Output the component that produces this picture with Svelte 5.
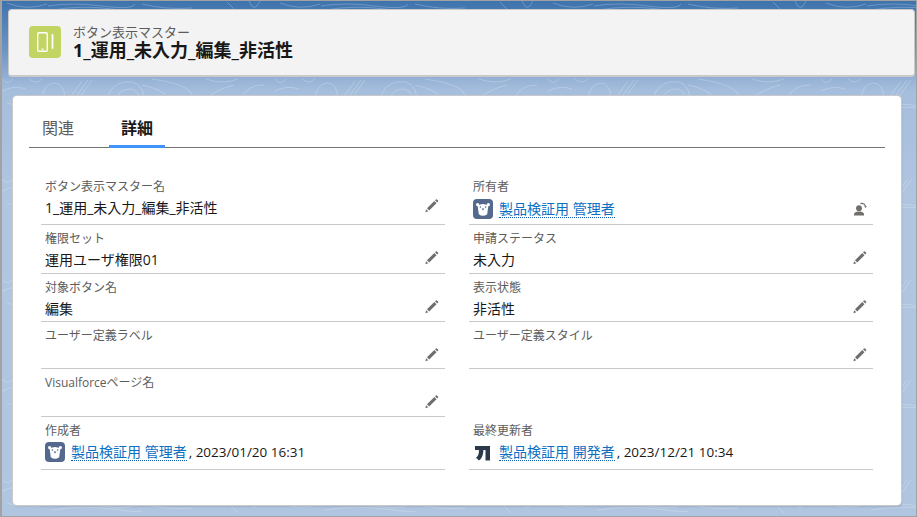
<script>
  const pencil = "M1.2 10.2 0.3 13.2 3.3 12.3ZM2 9.3 9.3 2 11.5 4.2 4.2 11.5ZM10 1.3 10.9.4Q11.4 0 11.9.4L13.1 1.6Q13.5 2.1 13.1 2.6L12.2 3.5Z";

  const rows = [
    [
      { label: "ボタン表示マスター名", value: "1_運用_未入力_編集_非活性", edit: true },
      { label: "所有者", user: "製品検証用 管理者", avatar: "bear", change: true }
    ],
    [
      { label: "権限セット", value: "運用ユーザ権限01", edit: true },
      { label: "申請ステータス", value: "未入力", edit: true }
    ],
    [
      { label: "対象ボタン名", value: "編集", edit: true },
      { label: "表示状態", value: "非活性", edit: true }
    ],
    [
      { label: "ユーザー定義ラベル", value: "", edit: true },
      { label: "ユーザー定義スタイル", value: "", edit: true }
    ],
    [{ label: "Visualforceページ名", value: "", edit: true }, null],
    [
      { label: "作成者", user: "製品検証用 管理者", avatar: "bear", date: "2023/01/20 16:31" },
      { label: "最終更新者", user: "製品検証用 開発者", avatar: "logo", date: "2023/12/21 10:34" }
    ]
  ];
</script>

{#snippet bear()}
  <svg class="avatar" viewBox="0 0 20 20">
    <rect width="20" height="20" rx="4" fill="#54698d" />
    <circle cx="4.6" cy="5.6" r="1.6" fill="#fff" />
    <circle cx="15.4" cy="5.6" r="1.6" fill="#fff" />
    <path d="M4.6 6.6Q10 3.6 15.4 6.6L14.2 15.2Q10 18.4 5.8 15.2Z" fill="#fff" />
    <circle cx="7.4" cy="8" r=".8" fill="#54698d" />
    <circle cx="12.6" cy="8" r=".8" fill="#54698d" />
    <path d="M8.6 9.6H11.4L10 11.4Z" fill="#54698d" />
  </svg>
{/snippet}

{#snippet logo()}
  <svg class="avatar" viewBox="0 0 20 20">
    <path d="M2 4H17V18.5H12.5V8H10.4Q10.4 15.4 6 18.5L3 15.8Q6 13.8 6 8H2Z" fill="#2b3a4a" />
  </svg>
{/snippet}

<div class="page">
  <svg class="contours" aria-hidden="true">
    <defs>
      <pattern id="topo" width="273" height="100" patternUnits="userSpaceOnUse">
        <g fill="none" stroke="#fff" stroke-opacity=".28" stroke-width=".8">
          <path d="M5 2Q25 10 45 3M46 5Q70 1 100 5T133 3M50 9Q80 4 110 8T140 10" />
          <path d="M140 3Q165 9 190 7M225 1Q232 8 236 12M247 0Q252 13 258 0" />
          <path d="M40 97Q42 83 52 82Q62 82 63 97" />
          <path d="M68 97 80 80M73 97 86 79M77 97 90 79" />
          <path d="M106 97Q108 84 122 81Q140 78 142 97M115 97Q118 88 128 88Q135 88 138 97" />
          <path d="M140 84Q160 88 166 97M150 78Q192 84 190 97" />
          <path d="M204 78Q220 84 236 78M204 97Q216 88 232 84" />
          <path d="M240 97Q245 84 262 84" />
          <path d="M0 78Q5 85 11 78M27 78Q34 84 40 78M0 90Q12 84 24 88" />
        </g>
      </pattern>
    </defs>
    <rect width="100%" height="100%" fill="url(#topo)" />
  </svg>

  <header class="highlights">
    <div class="icon-box">
      <svg viewBox="0 0 32 32" width="32" height="32">
        <rect x="8.7" y="6.7" width="9.6" height="18.6" rx="1.4" fill="none" stroke="#fff" stroke-width="1.4" />
        <rect x="12.4" y="22.6" width="2.2" height="1.2" fill="#fff" />
        <rect x="22.6" y="8" width="1.8" height="15" rx=".9" fill="#fff" />
      </svg>
    </div>
    <div class="titles">
      <div class="object">ボタン表示マスター</div>
      <h1>1_運用_未入力_編集_非活性</h1>
    </div>
  </header>

  <main class="card">
    <nav class="tabs">
      <span class="tab">関連</span>
      <span class="tab active">詳細</span>
    </nav>

    <div class="fields">
      {#each rows as row, i}
        {#each row as field}
          {#if field}
            <div class="field">
              <div class="label">{field.label}</div>
              <div class="value" class:owner={field.change}>
                {#if field.user}
                  {#if field.avatar === "bear"}
                    {@render bear()}
                  {:else}
                    {@render logo()}
                  {/if}
                  <span class="link">{field.user}</span>
                  {#if field.date}<span class="date">, {field.date}</span>{/if}
                {:else}
                  <span>{field.value}</span>
                {/if}
                {#if field.edit}
                  <svg class="action" viewBox="0 0 14 14"><path d={pencil} /></svg>
                {/if}
                {#if field.change}
                  <svg class="action change" viewBox="0 0 14 14">
                    <circle cx="6" cy="6.2" r="2.9" />
                    <path d="M1 13.4V11.6Q1.3 10.4 4.4 9.6H7.6Q10.7 10.4 11 11.6V13.4Z" />
                    <path d="M7.4 1.6Q11 .6 12.6 4" fill="none" stroke="#706e6b" stroke-width="1.1" />
                    <path d="M11 4.2H14L12.6 6Z" />
                  </svg>
                {/if}
              </div>
            </div>
          {:else}
            <div></div>
          {/if}
        {/each}
      {/each}
    </div>
  </main>
</div>

<style>
  :global(body) {
    margin: 0;
  }

  .page {
    position: relative;
    box-sizing: border-box;
    width: 917px;
    height: 517px;
    padding: 8px 0 0 6px;
    overflow: hidden;
    border: 1px solid #a2a2a2;
    border-left-width: 2px;
    background: linear-gradient(#3e73ad 0, #6e95c3 50px, #a6bedd 90px, #b0c5e0 200px);
    font-family: "Open Sans", "Noto Sans CJK JP", sans-serif;
    color: #16325c;
  }

  .contours {
    position: absolute;
    inset: 0;
    width: 100%;
    height: 100%;
  }

  .highlights {
    position: relative;
    box-sizing: border-box;
    display: flex;
    align-items: center;
    gap: 12px;
    width: 907px;
    height: 68px;
    padding: 0 20px;
    background: #f3f3f3;
    border: 1px solid #c9c9c9;
    border-bottom-width: 2px;
    border-radius: 4px;
  }

  .icon-box {
    display: flex;
    width: 32px;
    height: 32px;
    margin-top: -1px;
    background: #c2d563;
    border-radius: 4px;
  }

  .titles {
    padding-top: 1px;
  }

  .object {
    font-size: 13px;
    line-height: 15px;
    color: #5c5c5c;
  }

  h1 {
    margin: 0;
    font-size: 18px;
    line-height: 21px;
    font-weight: 700;
    color: #181818;
  }

  .card {
    position: relative;
    box-sizing: border-box;
    width: 888px;
    height: 409px;
    margin: 19px 0 0 5px;
    padding: 0 16px;
    background: #fff;
    border-radius: 4px;
    box-shadow: 0 0 0 1px #c9c9c9, 1px 2px 2px rgba(0, 0, 0, 0.12);
  }

  .tabs {
    display: flex;
    height: 51px;
    border-bottom: 1px solid #747474;
  }

  .tab {
    box-sizing: border-box;
    width: 80px;
    height: 52px;
    padding: 21px 0 0 13px;
    font-size: 16px;
    line-height: 22px;
    color: #5c5c5c;
  }

  .tab.active {
    width: 56px;
    padding-left: 12px;
    font-weight: 700;
    color: #181818;
    border-bottom: 3px solid #3e94f8;
  }

  .fields {
    display: grid;
    grid-template-columns: 404px 404px;
    grid-template-rows: 52px 49px 48px 47px 48px 53px;
    column-gap: 24px;
    margin: 25px 0 0 12px;
  }

  .field {
    box-sizing: border-box;
    padding: 7px 4px 0;
    border-bottom: 1px solid #c9c9c9;
  }

  .label {
    font-size: 12px;
    line-height: 14px;
    color: #5c5c5c;
  }

  .value {
    display: flex;
    align-items: center;
    gap: 6px;
    height: 24px;
    margin-top: 2px;
    font-size: 14px;
    line-height: 20px;
    color: #181818;
  }

  .value.owner {
    margin-top: 3px;
  }

  .avatar {
    width: 20px;
    height: 20px;
    flex: none;
  }

  .link {
    color: #0b6fc2;
    border-bottom: 1px dotted #0b5cab;
    line-height: 17px;
  }

  .date {
    margin-left: -4px;
    font-size: 13.5px;
  }

  .action {
    width: 14px;
    height: 14px;
    flex: none;
    margin-left: auto;
    margin-right: 2px;
    margin-top: -4px;
    fill: #706e6b;
  }

  .action.change {
    margin-top: 0;
  }
</style>
